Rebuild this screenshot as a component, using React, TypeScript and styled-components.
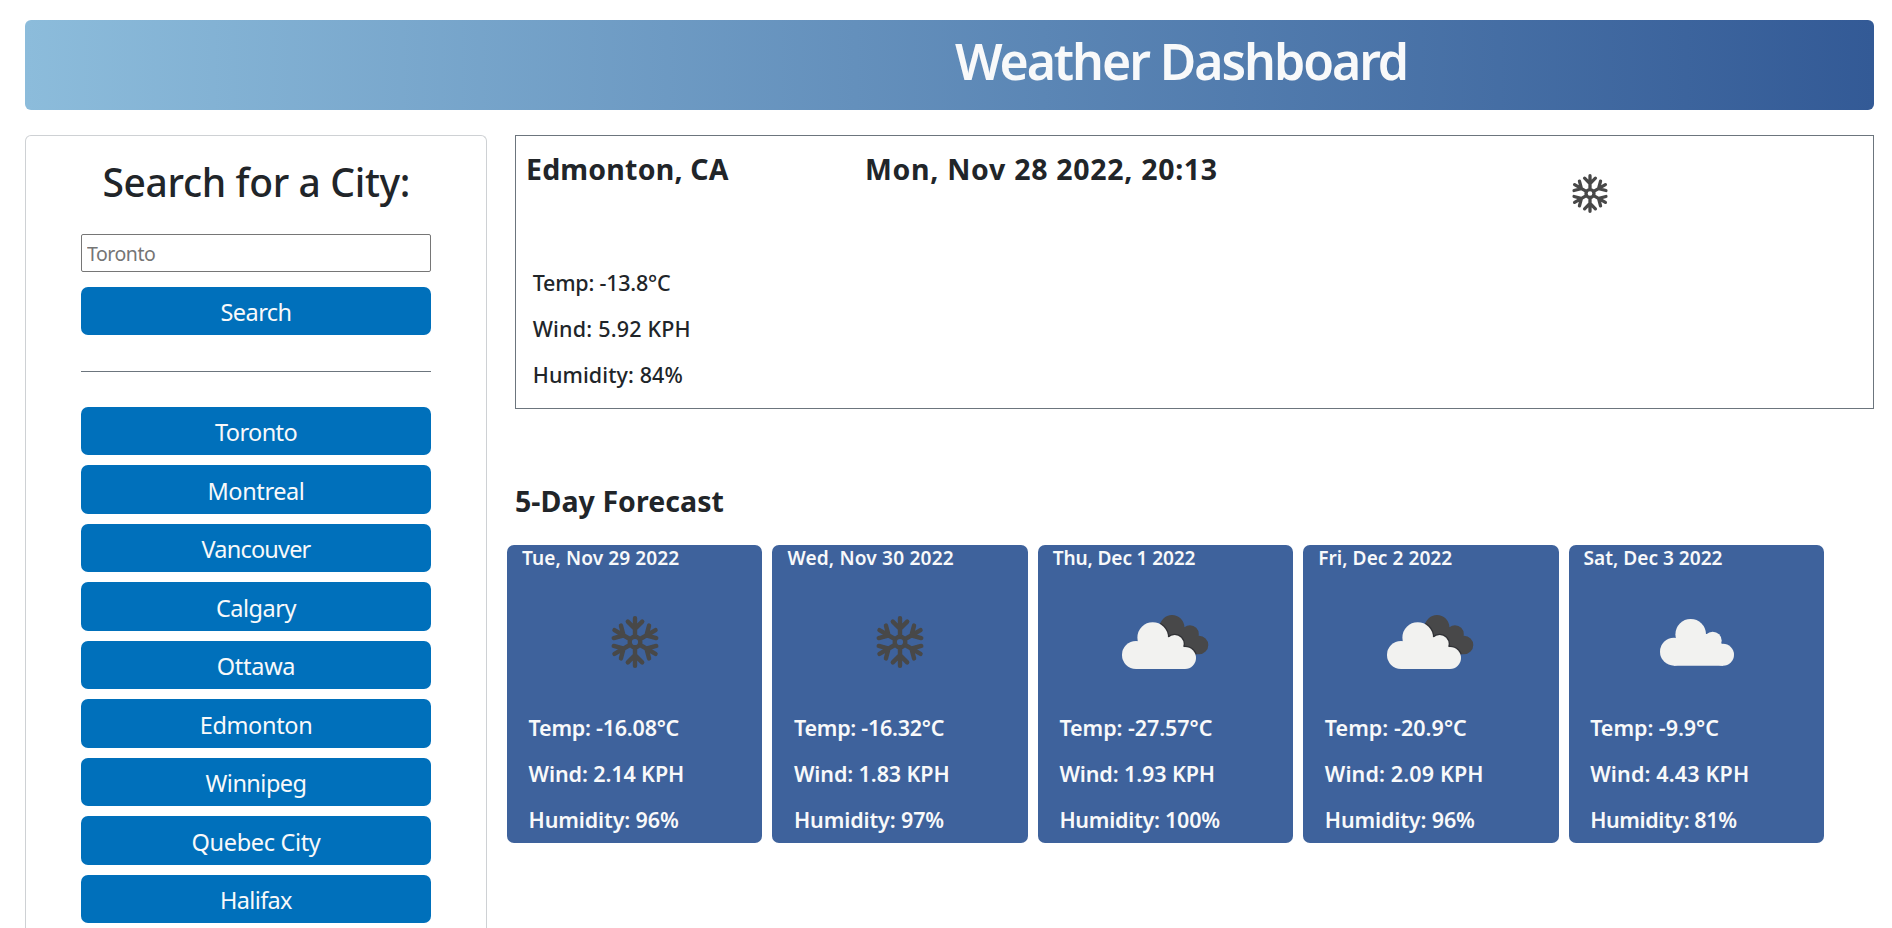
import React from 'react';
import styled, { createGlobalStyle } from 'styled-components';

const GlobalStyle = createGlobalStyle`
  *, *::before, *::after { box-sizing: border-box; }
  body {
    margin: 0;
    background: #fff;
    color: #212529;
    font-family: "Noto Sans", "Open Sans", sans-serif;
  }
`;

type Spaced = { $track?: number };
const track = (p: Spaced) => `${p.$track ?? 0}em`;

const Page = styled.div`
  height: 928px;
  overflow: hidden;
  padding: 20px 18px 0 25px;
`;

const Header = styled.header`
  display: grid;
  grid-template-columns: 463px 1fr;
  height: 90px;
  border-radius: 6px;
  background: linear-gradient(90deg, #8cbcdb, #335a96);
`;

const Title = styled.h1`
  grid-column: 2;
  margin: 0;
  padding-top: 4px;
  font-size: 50px;
  font-weight: 590;
  line-height: 75px;
  letter-spacing: -0.041em;
  text-align: center;
  color: #f8f9fa;
`;

const Columns = styled.div`
  display: grid;
  grid-template-columns: 461.5px 1fr;
  column-gap: 28.5px;
  margin-top: 25px;
`;

const Sidebar = styled.aside`
  height: 793px;
  padding: 21.6px 55px 0;
  border: 1px solid #ced1d4;
  border-bottom: 0;
  border-radius: 6px 6px 0 0;
`;

const SidebarTitle = styled.h2`
  margin: 0 -21px 28.4px -20px;
  font-size: 39px;
  font-weight: 490;
  line-height: 48px;
  letter-spacing: -0.009em;
  text-align: center;
`;

const CityInput = styled.input`
  display: block;
  width: 350px;
  height: 38px;
  padding: 2px 5px 0;
  border: 1px solid #767676;
  border-radius: 2px;
  background: #fff;
  font: 400 19.5px "Noto Sans", sans-serif;
  letter-spacing: -0.024em;
  &::placeholder { color: #757575; }
`;

const Button = styled.button<Spaced & { $tall?: boolean }>`
  display: block;
  width: 350px;
  height: ${(p) => (p.$tall ? 48.5 : 48)}px;
  padding: 2px 0 0;
  border: 0;
  border-radius: 7px;
  background: #0070bb;
  color: #f8f9fa;
  font: 400 23.5px/46px "Noto Sans", sans-serif;
  letter-spacing: ${track};
`;

const SearchForm = styled.div`
  display: grid;
  row-gap: 15px;
`;

const Divider = styled.hr`
  width: 350px;
  height: 1px;
  margin: 36px 0 35px;
  border: 0;
  background: #6c757d;
`;

const CityList = styled.div`
  display: grid;
  row-gap: 10px;
`;

const Current = styled.section`
  height: 274px;
  padding: 13px 0 0 10px;
  border: 1px solid #6c757d;
`;

const CurrentTop = styled.div`
  display: grid;
  grid-template-columns: 339px 442px 1fr;
  height: 111px;
`;

const Heading = styled.h3<Spaced>`
  margin: 0;
  font-size: 28.5px;
  font-weight: 690;
  line-height: 40px;
  letter-spacing: ${track};
  white-space: nowrap;
`;

const CurrentIcon = styled.div`
  padding-top: 24.5px;
  text-align: center;
  line-height: 0;
`;

const Stats = styled.div<{ $bold?: boolean }>`
  padding: ${(p) => (p.$bold ? '1px 0 0 6.6px' : '0 0 0 6.7px')};
  font-size: 21.5px;
  font-weight: ${(p) => (p.$bold ? 570 : 480)};
  line-height: 46px;
  white-space: nowrap;
`;

const Stat = styled.p<Spaced>`
  margin: 0;
  letter-spacing: ${track};
`;

const ForecastHeading = styled(Heading)`
  margin: 71.5px 0 24.5px;
`;

const ForecastRow = styled.div`
  display: grid;
  grid-template-columns: repeat(5, 255.4px);
  column-gap: 10px;
  margin-left: -8px;
`;

const Card = styled.article`
  height: 298px;
  padding: 0 15px;
  border-radius: 7px;
  background: #3e629c;
  color: #f8f9fa;
`;

const CardDate = styled.h4<Spaced>`
  margin: 0;
  padding-top: 1px;
  font-size: 19.1px;
  font-weight: 570;
  line-height: 25px;
  letter-spacing: ${track};
  white-space: nowrap;
`;

const CardIcon = styled.div`
  display: flex;
  align-items: center;
  justify-content: center;
  height: 133px;
  padding-top: 9px;
`;

function Snowflake({ width = 48 }: { width?: number }) {
  return (
    <svg width={width} height={(width * 52) / 48} viewBox="-24 -26 48 52" fill="none" stroke="#484848" strokeWidth="4.4" strokeLinecap="round">
      <circle r="5.3" />
      {[0, 60, 120, 180, 240, 300].map((a) => (
        <path key={a} d="M0-7V-23.7M-7.2-20.4L0-13.2L7.2-20.4" transform={`rotate(${a})`} />
      ))}
    </svg>
  );
}

function CloudShape() {
  return (
    <>
      <circle cx="30.7" cy="15.3" r="15.3" />
      <circle cx="14" cy="32.7" r="14" />
      <circle cx="52.7" cy="21.7" r="9" />
      <circle cx="63" cy="35.7" r="11" />
      <path d="M14 46.7V20L30 15H52L63 26V46.7Z" />
    </>
  );
}

function Cloud() {
  return (
    <svg width="75" height="47" viewBox="-1 0 75 47" fill="#f2f2f0">
      <CloudShape />
    </svg>
  );
}

function BrokenClouds() {
  return (
    <svg width="87" height="54" viewBox="0 0 87 54">
      <defs>
        <clipPath id="rear">
          <circle cx="50" cy="12.4" r="12.4" />
          <circle cx="68" cy="19" r="8.8" />
          <circle cx="77" cy="30" r="9.3" />
          <path d="M50 12L68 19L77 39.3H50Z" />
        </clipPath>
      </defs>
      <g clipPath="url(#rear)">
        <path d="M30 0H87V54H30Z" fill="#484849" />
        <g transform="translate(0 7.3)" stroke="#303135" strokeWidth="2.6">
          <CloudShape />
        </g>
      </g>
      <g transform="translate(0 7.3)" fill="#f2f2f0">
        <CloudShape />
      </g>
    </svg>
  );
}

const icons = { snow: Snowflake, broken: BrokenClouds, cloud: Cloud };

const cities: [string, number][] = [
  ['Toronto', -0.0255],
  ['Montreal', -0.017],
  ['Vancouver', -0.0345],
  ['Calgary', -0.02],
  ['Ottawa', -0.012],
  ['Edmonton', -0.015],
  ['Winnipeg', -0.0227],
  ['Quebec City', -0.0142],
  ['Halifax', -0.028],
];

type Line = [string, number];
type Day = { date: Line; icon: keyof typeof icons; stats: Line[] };

const forecast: Day[] = [
  {
    date: ['Tue, Nov 29 2022', 0.004],
    icon: 'snow',
    stats: [['Temp: -16.08°C', -0.011], ['Wind: 2.14 KPH', -0.005], ['Humidity: 96%', -0.006]],
  },
  {
    date: ['Wed, Nov 30 2022', 0.009],
    icon: 'snow',
    stats: [['Temp: -16.32°C', -0.012], ['Wind: 1.83 KPH', -0.005], ['Humidity: 97%', -0.006]],
  },
  {
    date: ['Thu, Dec 1 2022', -0.008],
    icon: 'broken',
    stats: [['Temp: -27.57°C', -0.003], ['Wind: 1.93 KPH', -0.005], ['Humidity: 100%', -0.012]],
  },
  {
    date: ['Fri, Dec 2 2022', 0.002],
    icon: 'broken',
    stats: [['Temp: -20.9°C', 0.002], ['Wind: 2.09 KPH', 0.006], ['Humidity: 96%', -0.006]],
  },
  {
    date: ['Sat, Dec 3 2022', 0],
    icon: 'cloud',
    stats: [['Temp: -9.9°C', -0.002], ['Wind: 4.43 KPH', 0.007], ['Humidity: 81%', -0.019]],
  },
];

const today: Line[] = [['Temp: -13.8°C', -0.01], ['Wind: 5.92 KPH', 0.009], ['Humidity: 84%', 0.005]];

function StatList({ lines, bold }: { lines: Line[]; bold?: boolean }) {
  return (
    <Stats $bold={bold}>
      {lines.map(([text, t]) => (
        <Stat key={text} $track={t}>{text}</Stat>
      ))}
    </Stats>
  );
}

export default function App() {
  return (
    <Page>
      <GlobalStyle />
      <Header>
        <Title>Weather Dashboard</Title>
      </Header>
      <Columns>
        <Sidebar>
          <SidebarTitle>Search for a City:</SidebarTitle>
          <SearchForm>
            <CityInput placeholder="Toronto" />
            <Button $track={-0.024}>Search</Button>
          </SearchForm>
          <Divider />
          <CityList>
            {cities.map(([name, t]) => (
              <Button key={name} $tall $track={t}>{name}</Button>
            ))}
          </CityList>
        </Sidebar>
        <main>
          <Current>
            <CurrentTop>
              <Heading $track={0.007}>Edmonton, CA</Heading>
              <Heading $track={0.0245}>Mon, Nov 28 2022, 20:13</Heading>
              <CurrentIcon><Snowflake width={36} /></CurrentIcon>
            </CurrentTop>
            <StatList lines={today} />
          </Current>
          <ForecastHeading $track={0.002}>5-Day Forecast</ForecastHeading>
          <ForecastRow>
            {forecast.map(({ date, icon, stats }) => {
              const Icon = icons[icon];
              return (
                <Card key={date[0]}>
                  <CardDate $track={date[1]}>{date[0]}</CardDate>
                  <CardIcon><Icon /></CardIcon>
                  <StatList lines={stats} bold />
                </Card>
              );
            })}
          </ForecastRow>
        </main>
      </Columns>
    </Page>
  );
}
